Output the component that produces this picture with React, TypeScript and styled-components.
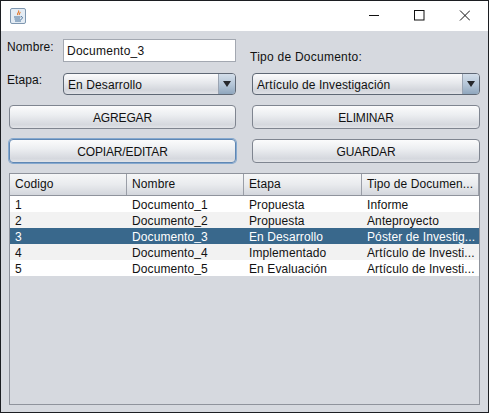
import React from 'react';
import styled, { createGlobalStyle } from 'styled-components';

const GlobalStyle = createGlobalStyle`
  html, body {
    margin: 0;
    padding: 0;
    background: #d6d9df;
  }
`;

const Window = styled.div`
  box-sizing: border-box;
  width: 489px;
  height: 413px;
  display: flex;
  flex-direction: column;
  border: 1px solid #1c1e22;
  background: #d6d9df;
  font-family: 'Liberation Sans', Arial, sans-serif;
  font-size: 12px;
  letter-spacing: 0.1px;
  color: #111;
  overflow: hidden;
`;

const TitleBar = styled.div`
  box-sizing: border-box;
  height: 30px;
  flex-shrink: 0;
  display: flex;
  align-items: center;
  background: #fff;
  padding: 0 1px 1px 9px;
`;

const AppIcon = styled.svg`
  width: 16px;
  height: 16px;
  display: block;
`;

const Controls = styled.div`
  margin-left: auto;
  display: flex;
  height: 100%;
`;

const ControlButton = styled.div`
  width: 45px;
  height: 100%;
  display: flex;
  align-items: center;
  justify-content: center;
`;

const Content = styled.div`
  flex: 1;
  min-height: 0;
  display: flex;
  flex-direction: column;
  padding: 8px 8px 7px 8px;
`;

const Form = styled.div`
  display: grid;
  grid-template-columns: 227px 228px;
  column-gap: 16px;
  margin-bottom: 10px;
`;

const FieldColumn = styled.div`
  height: 56px;
  display: grid;
  grid-template-columns: 56px 173px;
  grid-template-rows: 23px 22px;
  row-gap: 11px;
  margin-left: -2px;
  width: 229px;
`;

const RightColumn = styled.div`
  height: 56px;
  display: flex;
  flex-direction: column;
  justify-content: flex-end;
`;

const FieldLabel = styled.div<{ $offset?: number }>`
  font-size: 12px;
  line-height: 14px;
  padding-top: ${({ $offset }) => $offset ?? 0}px;
`;

const TypeLabel = styled.div`
  font-size: 12px;
  line-height: 14px;
  letter-spacing: 0.25px;
  margin: 0 0 9px -2px;
`;

const TextField = styled.div`
  box-sizing: border-box;
  height: 23px;
  background: #fff;
  border: 1px solid #a3a8b1;
  padding-left: 3px;
  font-size: 12px;
  letter-spacing: 0.25px;
  line-height: 22px;
`;

const Combo = styled.div`
  box-sizing: border-box;
  height: 22px;
  display: flex;
  border: 1px solid #5f6875;
  border-radius: 4px;
  overflow: hidden;
  background: linear-gradient(#fbfbfc 0%, #e6e8ec 45%, #d3d6dc 80%, #dfe1e6 100%);
`;

const ComboValue = styled.div`
  flex: 1;
  padding-left: 4px;
  font-size: 12px;
  line-height: 22px;
`;

const ComboArrow = styled.div`
  width: 16px;
  display: flex;
  align-items: center;
  justify-content: center;
  border-left: 1px solid #9aa4b2;
  background: linear-gradient(#d3deea 0%, #b3c4d6 55%, #8fa6bd 100%);
`;

const ArrowGlyph = styled.div`
  width: 0;
  height: 0;
  border-left: 4px solid transparent;
  border-right: 4px solid transparent;
  border-top: 6px solid #26282c;
`;

const Actions = styled.div`
  display: grid;
  grid-template-columns: 227px 228px;
  column-gap: 16px;
  row-gap: 10px;
  margin-bottom: 10px;
`;

const ActionButton = styled.div<{ $focused?: boolean }>`
  box-sizing: border-box;
  height: 24px;
  display: flex;
  align-items: center;
  justify-content: center;
  padding-top: 1px;
  border: 1px solid ${({ $focused }) => ($focused ? '#5f87b4' : '#7f8590')};
  border-radius: 4px;
  font-size: 12px;
  letter-spacing: -0.15px;
  background: linear-gradient(#fbfbfc 0%, #eceef1 40%, #d5d8de 85%, #e2e4e8 100%);
  box-shadow: ${({ $focused }) => ($focused ? '0 0 0 1px #86a9cf' : 'none')};
`;

const TableFrame = styled.div`
  flex: 1;
  min-height: 0;
  border: 1px solid #8f939c;
  display: flex;
  flex-direction: column;
`;

const Row = styled.div`
  display: grid;
  grid-template-columns: 117px 117px 118px 1fr;
`;

const HeaderRow = styled(Row)`
  box-sizing: border-box;
  height: 22px;
  background: linear-gradient(#f6f7f8 0%, #e9ebee 50%, #d3d6dc 100%);
  border-bottom: 1px solid #8f939c;
`;

const HeaderCell = styled.div`
  box-sizing: border-box;
  padding-left: 5px;
  line-height: 21px;
  font-size: 12px;
  border-right: 1px solid #9a9ea7;
  white-space: nowrap;
`;

const BodyRow = styled(Row)<{ $selected?: boolean; $alt?: boolean }>`
  height: 16px;
  background: ${({ $selected, $alt }) => ($selected ? '#39688c' : $alt ? '#f2f2f2' : '#fff')};
  color: ${({ $selected }) => ($selected ? '#fff' : '#111')};
`;

const BodyCell = styled.div`
  padding-left: 5px;
  font-size: 12px;
  line-height: 18px;
  white-space: nowrap;
`;

// the row is only 16px tall, so the underscore has to sit a little higher to stay inside it
const Underscore = styled.span`
  line-height: 0;
  vertical-align: 1px;
`;

const rows = [
  ['1', 'Documento_1', 'Propuesta', 'Informe'],
  ['2', 'Documento_2', 'Propuesta', 'Anteproyecto'],
  ['3', 'Documento_3', 'En Desarrollo', 'Póster de Investig...'],
  ['4', 'Documento_4', 'Implementado', 'Artículo de Investi...'],
  ['5', 'Documento_5', 'En Evaluación', 'Artículo de Investi...'],
];

const renderCell = (cell: string) => {
  const [name, suffix] = cell.split('_');
  if (suffix === undefined) return cell;
  return (
    <>
      {name}
      <Underscore>_</Underscore>
      {suffix}
    </>
  );
};

const App = () => (
  <>
    <GlobalStyle />
    <Window>
      <TitleBar>
        <AppIcon viewBox="0 0 16 16">
          <rect x="0.5" y="0.5" width="15" height="15" rx="1.5" fill="#e4ecf4" stroke="#7f97b0" />
          <path d="M8.5 2.5c1.5 1.5-2 2.5-.8 4.5M10 4c.6 1-1.4 1.6-.6 3" stroke="#e2762a" strokeWidth="1.1" fill="none" />
          <path d="M4 9h6.5M4.5 11h5.5M5 13h6" stroke="#47709a" strokeWidth="1" fill="none" />
          <path d="M11 8.5c2 0 2 2.5-.5 3" stroke="#47709a" strokeWidth="1" fill="none" />
        </AppIcon>
        <Controls>
          <ControlButton>
            <svg width="11" height="11" viewBox="0 0 11 11">
              <path d="M0 5.5h10" stroke="#111" strokeWidth="1" />
            </svg>
          </ControlButton>
          <ControlButton>
            <svg width="11" height="11" viewBox="0 0 11 11">
              <rect x="0.5" y="0.5" width="9.5" height="9.5" fill="none" stroke="#111" strokeWidth="1" />
            </svg>
          </ControlButton>
          <ControlButton>
            <svg width="11" height="11" viewBox="0 0 11 11">
              <path d="M1 0.5l10 10M11 0.5l-10 10" stroke="#111" strokeWidth="1" />
            </svg>
          </ControlButton>
        </Controls>
      </TitleBar>
      <Content>
        <Form>
          <FieldColumn>
            <FieldLabel $offset={1}>Nombre:</FieldLabel>
            <TextField>Documento_3</TextField>
            <FieldLabel>Etapa:</FieldLabel>
            <Combo>
              <ComboValue>En Desarrollo</ComboValue>
              <ComboArrow>
                <ArrowGlyph />
              </ComboArrow>
            </Combo>
          </FieldColumn>
          <RightColumn>
            <TypeLabel>Tipo de Documento:</TypeLabel>
            <Combo>
              <ComboValue>Artículo de Investigación</ComboValue>
              <ComboArrow>
                <ArrowGlyph />
              </ComboArrow>
            </Combo>
          </RightColumn>
        </Form>
        <Actions>
          <ActionButton>AGREGAR</ActionButton>
          <ActionButton>ELIMINAR</ActionButton>
          <ActionButton $focused>COPIAR/EDITAR</ActionButton>
          <ActionButton>GUARDAR</ActionButton>
        </Actions>
        <TableFrame>
          <HeaderRow>
            <HeaderCell>Codigo</HeaderCell>
            <HeaderCell>Nombre</HeaderCell>
            <HeaderCell>Etapa</HeaderCell>
            <HeaderCell>Tipo de Documen...</HeaderCell>
          </HeaderRow>
          {rows.map((row, i) => (
            <BodyRow key={row[0]} $selected={i === 2} $alt={i % 2 === 1}>
              {row.map((cell) => (
                <BodyCell key={cell}>{renderCell(cell)}</BodyCell>
              ))}
            </BodyRow>
          ))}
        </TableFrame>
      </Content>
    </Window>
  </>
);

export default App;
